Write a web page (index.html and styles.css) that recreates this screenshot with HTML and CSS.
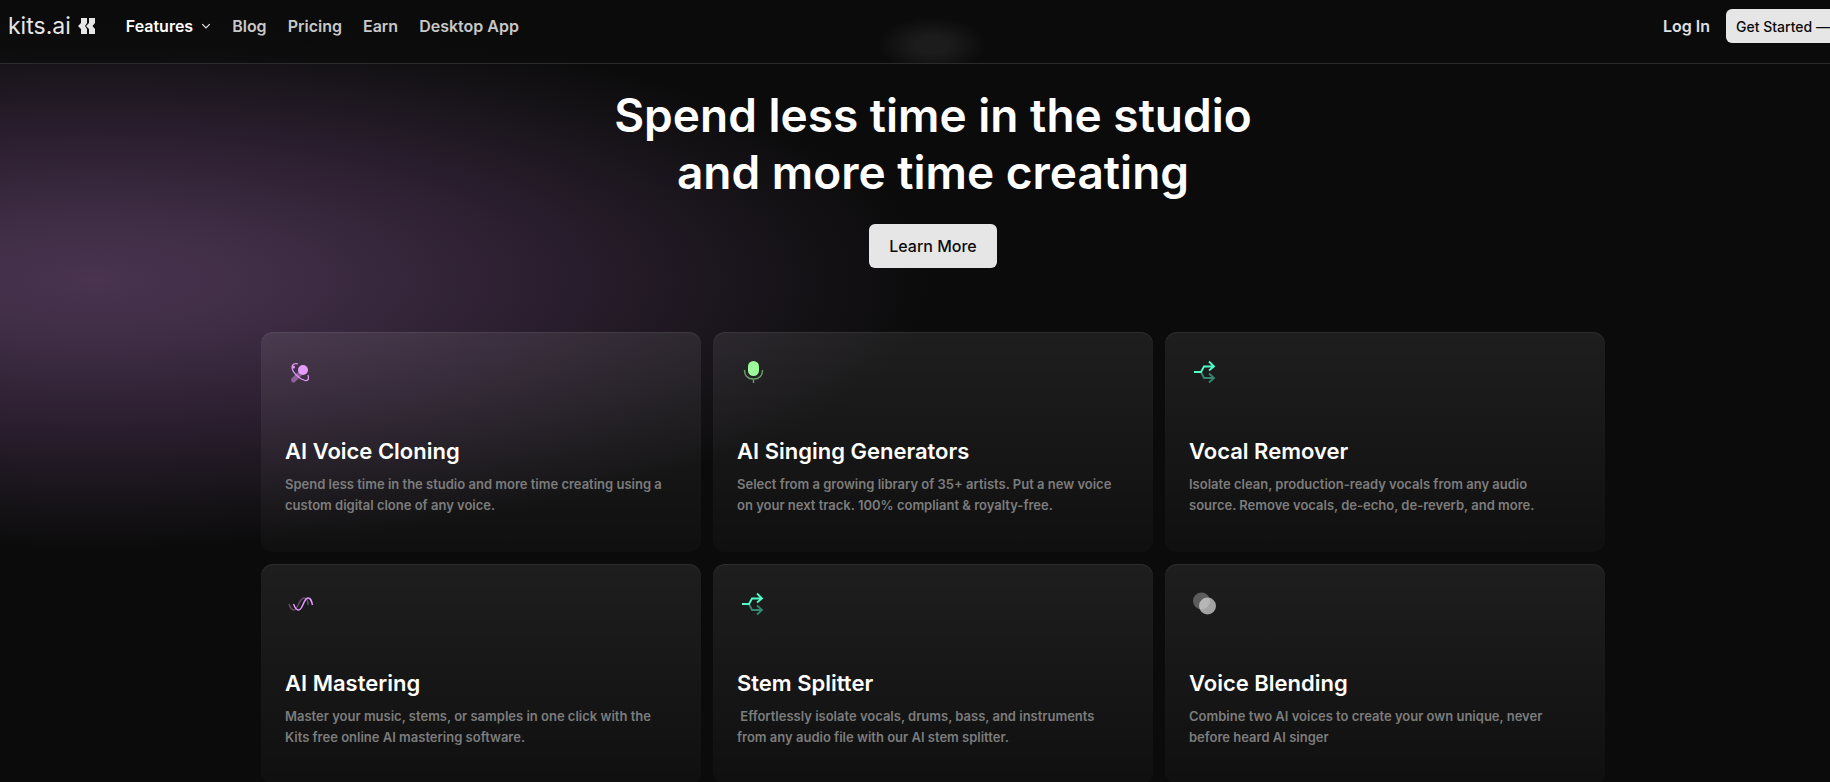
FILE: index.html
```html
<!DOCTYPE html>
<html lang="en">
<head>
<meta charset="utf-8">
<title>Kits AI</title>
<link rel="stylesheet" href="styles.css">
</head>
<body>
<div class="page">
  <header class="header">
    <a class="logo" href="#" aria-label="kits.ai home">
      <span class="logo-text">kits.ai</span>
      <svg class="logo-mark" viewBox="0 0 18 18" aria-hidden="true"><path d="M3 1H9V6L7 9L9 12V17H3V12L0 9L3 6ZM11 1H17V6L14.500 9L17 12V17H11V12L8 9L11 6Z"/></svg>
    </a>
    <nav class="nav">
      <a class="nav-link active" href="#">Features
        <svg class="chevron" viewBox="0 0 8 8" aria-hidden="true"><path d="M1 2.500L4 5.500L7 2.500"/></svg>
      </a>
      <a class="nav-link" href="#">Blog</a>
      <a class="nav-link" href="#">Pricing</a>
      <a class="nav-link" href="#">Earn</a>
      <a class="nav-link" href="#">Desktop App</a>
    </nav>
    <div class="account">
      <a class="login" href="#">Log In</a>
      <button class="start" type="button">Get Started —</button>
    </div>
  </header>

  <main class="main">
    <section class="hero">
      <h1 class="headline">Spend less time in the studio<br>and more time creating</h1>
      <button class="learn" type="button">Learn More</button>
    </section>

    <section class="cards">
      <article class="card">
        <svg class="icon" viewBox="0 0 32 32" aria-hidden="true">
          <path d="M8.500 23L15.500 16" stroke="#8d5f9b" stroke-width="5" stroke-linecap="round"/>
          <circle cx="18" cy="13" r="5" fill="#e39bfd"/>
          <path d="M13 7C10 6 7 7 7 10C7 15 14 22 20 23.500C24 24 24 21 23 18" fill="none" stroke="#e39bfd" stroke-width="1.200"/>
          <circle cx="8.500" cy="10" r="1.500" fill="#e39bfd"/>
        </svg>
        <h2 class="card-title">AI Voice Cloning</h2>
        <p class="card-text">Spend less time in the studio and more time creating using a<br>custom digital clone of any voice.</p>
      </article>
      <article class="card">
        <svg class="icon" viewBox="0 0 32 32" aria-hidden="true">
          <rect x="11" y="4" width="11" height="15" rx="5.500" fill="#9dfa9b"/>
          <path d="M7.500 13C7.500 19 11 22 16.500 22S25.500 19 25.500 13M16.500 22V26" fill="none" stroke="#649b63" stroke-width="1.500"/>
        </svg>
        <h2 class="card-title">AI Singing Generators</h2>
        <p class="card-text">Select from a growing library of 35+ artists. Put a new voice<br>on your next track. 100% compliant &amp; royalty-free.</p>
      </article>
      <article class="card">
        <svg class="icon" viewBox="0 0 32 32" aria-hidden="true">
          <path d="M12 15L15 21H25M20 16.500L25 21L20 25.500" fill="none" stroke="#348870" stroke-width="1.800"/>
          <path d="M5 15H12L15 9.500H25M20 4.500L25 9.500L20 13.500" fill="none" stroke="#51ffc8" stroke-width="1.800"/>
        </svg>
        <h2 class="card-title">Vocal Remover</h2>
        <p class="card-text">Isolate clean, production-ready vocals from any audio<br>source. Remove vocals, de-echo, de-reverb, and more.</p>
      </article>
      <article class="card">
        <svg class="icon" viewBox="0 0 32 32" aria-hidden="true">
          <path d="M4 15C5 18 6 21 9 21C13 21 14 9 19 9C22 9 23 13 23 16" fill="none" stroke="#68486f" stroke-width="1.500"/>
          <path d="M8.500 15C10 19 11 21 13.500 21C18 21 18.500 9 23 9C26 9 26.500 12 27.500 16" fill="none" stroke="#e39bfd" stroke-width="1.500"/>
        </svg>
        <h2 class="card-title">AI Mastering</h2>
        <p class="card-text">Master your music, stems, or samples in one click with the<br>Kits free online AI mastering software.</p>
      </article>
      <article class="card">
        <svg class="icon" viewBox="0 0 32 32" aria-hidden="true">
          <path d="M12 15L15 21H25M20 16.500L25 21L20 25.500" fill="none" stroke="#348870" stroke-width="1.800"/>
          <path d="M5 15H12L15 9.500H25M20 4.500L25 9.500L20 13.500" fill="none" stroke="#51ffc8" stroke-width="1.800"/>
        </svg>
        <h2 class="card-title">Stem Splitter</h2>
        <p class="card-text">&nbsp;Effortlessly isolate vocals, drums, bass, and instruments<br>from any audio file with our AI stem splitter.</p>
      </article>
      <article class="card">
        <svg class="icon" viewBox="0 0 32 32" aria-hidden="true">
          <circle cx="12.500" cy="12" r="8.500" fill="#5c5c5c"/>
          <circle cx="18.500" cy="17" r="8.500" fill="#ddd" fill-opacity=".7"/>
        </svg>
        <h2 class="card-title">Voice Blending</h2>
        <p class="card-text">Combine two AI voices to create your own unique, never<br>before heard AI singer</p>
      </article>
    </section>
  </main>
</div>
</body>
</html>
```
FILE: styles.css
```css
* { box-sizing: border-box; }

html { background: #0b0b0b; }

body {
  margin: 0;
  overflow: hidden;
  font-family: Inter, "Liberation Sans", sans-serif;
  color: #fff;
}

a { color: inherit; text-decoration: none; }

button { border: 0; font-family: inherit; color: #0b0b0b; background: #e6e6e6; border-radius: 6px; white-space: nowrap; }

/* The page runs slightly wider than the window */
.page {
  margin-right: -36px;
  min-height: 100vh;
  background:
    radial-gradient(ellipse 840px 270px at 94px 280px, #49334f 0%, #3f2d45 22%, #2a1e2e 55%, #18141a 80%, #0b0b0b 100%) #0b0b0b;
}

.header {
  display: flex;
  align-items: flex-start;
  height: 64px;
  padding: 9px 24px 0 8px;
  border-bottom: 1px solid #2b2b2b;
  background:
    radial-gradient(ellipse 54px 28px at 932px 45px, #1c1c1c 30%, transparent 100%),
    linear-gradient(rgba(11, 11, 11, 0.9), rgba(11, 11, 11, 0.7));
}

.logo { display: flex; align-items: center; gap: 7px; height: 34px; color: #e6e6e6; }
.logo-text { font-size: 23px; line-height: 34px; }
.logo-mark { width: 18px; height: 18px; fill: #e6e6e6; }

.nav { display: flex; gap: 21px; margin-left: 30px; font-size: 16px; font-weight: 600; line-height: 34px; color: #c8c8c8; }
.nav-link { display: flex; align-items: center; gap: 8px; }
.active { color: #fff; }
.chevron { width: 10px; height: 10px; fill: none; stroke: #e6e6e6; stroke-width: 1; }

.account { display: flex; gap: 16px; margin-left: auto; }
.login { font-size: 16px; font-weight: 600; line-height: 34px; color: #e0e0e0; }
.start { width: 116px; height: 34px; padding: 0 10px; font-size: 14px; font-weight: 500; text-align: left; }

.hero { display: flex; flex-direction: column; align-items: center; padding-top: 23px; }
.headline { margin: 0; font-size: 46px; font-weight: 600; line-height: 57px; text-align: center; }
.learn { height: 44px; margin-top: 23px; padding: 0 20px; font-size: 16px; font-weight: 500; }

.cards {
  display: grid;
  grid-template-columns: repeat(3, 1fr);
  gap: 12px;
  max-width: 1344px;
  margin: 64px auto 0;
}

.card {
  min-height: 220px;
  padding: 25px 0 32px 24px;
  border-radius: 12px;
  background: linear-gradient(rgba(255, 255, 255, 0.08), rgba(255, 255, 255, 0.02));
  box-shadow: inset 0 1px 1px rgba(255, 255, 255, 0.08);
}

.icon { display: block; width: 32px; height: 32px; }
.card-title { margin: 49px 0 0; font-size: 22px; font-weight: 600; line-height: 26px; }
.card-text { margin: 10px 0 0; font-size: 13px; font-weight: 600; line-height: 21px; color: #7c7c7c; white-space: nowrap; }
```
